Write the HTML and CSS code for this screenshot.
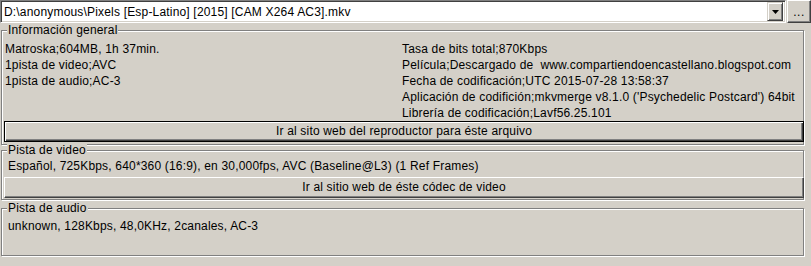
FILE: index.html
```html
<!DOCTYPE html>
<html lang="es">
<head>
<meta charset="utf-8">
<title>MediaInfo</title>
<link rel="stylesheet" href="styles.css">
</head>
<body>
<div class="window">
  <div class="toolbar">
    <div class="combo">
      <span class="combo-text">D:\anonymous\Pixels [Esp-Latino] [2015] [CAM X264 AC3].mkv</span>
      <div class="drop">
        <svg width="7" height="4" viewBox="0 0 7 4"><path d="M0 0h7L3.5 4z" fill="#000"/></svg>
      </div>
    </div>
    <div class="dots">...</div>
  </div>

  <div class="group g-general">
    <div class="legend">Información general</div>
    <div class="cols">
      <div class="col">
        <div class="line">Matroska;604MB, 1h 37min.</div>
        <div class="line">1pista de video;AVC</div>
        <div class="line">1pista de audio;AC-3</div>
      </div>
      <div class="col">
        <div class="line">Tasa de bits total;870Kbps</div>
        <div class="line">Película;Descargado de&nbsp; www.compartiendoencastellano.blogspot.com</div>
        <div class="line">Fecha de codificación;UTC 2015-07-28 13:58:37</div>
        <div class="line">Aplicación de codifición;mkvmerge v8.1.0 ('Psychedelic Postcard') 64bit</div>
        <div class="line">Librería de codificación;Lavf56.25.101</div>
      </div>
    </div>
    <div class="btn btn-default">Ir al sito web del reproductor para éste arquivo</div>
  </div>

  <div class="group g-video">
    <div class="legend">Pista de video</div>
    <div class="line text">Español, 725Kbps, 640*360 (16:9), en 30,000fps, AVC (Baseline@L3) (1 Ref Frames)</div>
    <div class="btn btn-normal">Ir al sitio web de éste códec de video</div>
  </div>

  <div class="group g-audio">
    <div class="legend">Pista de audio</div>
    <div class="line text">unknown, 128Kbps, 48,0KHz, 2canales, AC-3</div>
  </div>
</div>
</body>
</html>
```

FILE: styles.css
```css
html, body {
  margin: 0;
  padding: 0;
  background: #d4d0c8;
}
body {
  font-family: "Liberation Sans", Arial, sans-serif;
  font-size: 12px;
  letter-spacing: 0.18px;
  color: #000;
  width: 811px;
  height: 266px;
  overflow: hidden;
}
.window {
  width: 811px;
}
.toolbar {
  display: flex;
  gap: 1px;
  height: 23px;
}
.combo {
  box-sizing: border-box;
  width: 786px;
  height: 23px;
  background: #fff;
  border-top: 1px solid #808080;
  border-left: 1px solid #808080;
  border-right: 1px solid #fff;
  border-bottom: 1px solid #fff;
  box-shadow: inset 1px 1px 0 #404040, inset -1px -1px 0 #d4d0c8;
  display: flex;
  align-items: center;
  padding: 2px 2px 2px 3px;
}
.combo-text {
  flex: 1;
  white-space: nowrap;
  overflow: hidden;
  line-height: 16px;
}
.drop {
  box-sizing: border-box;
  width: 16px;
  height: 19px;
  background: #d4d0c8;
  border-top: 1px solid #d4d0c8;
  border-left: 1px solid #d4d0c8;
  border-right: 1px solid #404040;
  border-bottom: 1px solid #404040;
  box-shadow: inset 1px 1px 0 #fff, inset -1px -1px 0 #808080;
  display: flex;
  align-items: center;
  justify-content: center;
}
.dots {
  box-sizing: border-box;
  width: 24px;
  height: 23px;
  border-top: 1px solid #fff;
  border-left: 1px solid #fff;
  border-right: 1px solid #404040;
  border-bottom: 1px solid #404040;
  box-shadow: inset -1px -1px 0 #808080;
  text-align: center;
  line-height: 22px;
  letter-spacing: 0.5px;
}
.group {
  position: relative;
  box-sizing: border-box;
  width: 803px;
  margin-left: 1px;
  border: 1px solid #808080;
  box-shadow: inset 1px 1px 0 #fff, 1px 1px 0 #fff;
  padding: 0 1px;
}
.legend {
  position: absolute;
  top: -8px;
  left: 5px;
  padding: 0 1px;
  background: #d4d0c8;
  line-height: 14px;
}
.line {
  line-height: 16px;
  white-space: nowrap;
}
.g-general {
  margin-top: 7px;
  height: 115px;
  padding-top: 10px;
}
.cols {
  display: grid;
  grid-template-columns: 397px 1fr;
  padding-left: 2px;
  height: 79px;
}
.btn {
  box-sizing: border-box;
  width: 800px;
  height: 21px;
  margin-left: 1px;
  text-align: center;
  line-height: 18px;
}
.btn-default {
  margin-top: 1px;
  border: 1px solid #000;
  box-shadow: inset 1px 1px 0 #fff, inset -1px -1px 0 #404040, inset -2px -2px 0 #808080;
}
.btn-normal {
  margin-top: 3px;
  border-top: 1px solid #fff;
  border-left: 1px solid #fff;
  border-right: 1px solid #404040;
  border-bottom: 1px solid #404040;
  box-shadow: inset -1px -1px 0 #808080;
  line-height: 19px;
}
.text {
  padding-left: 5px;
}
.g-video {
  margin-top: 5px;
  height: 50px;
  padding-top: 7px;
}
.g-audio {
  margin-top: 8px;
  height: 48px;
  padding-top: 9px;
}
```
